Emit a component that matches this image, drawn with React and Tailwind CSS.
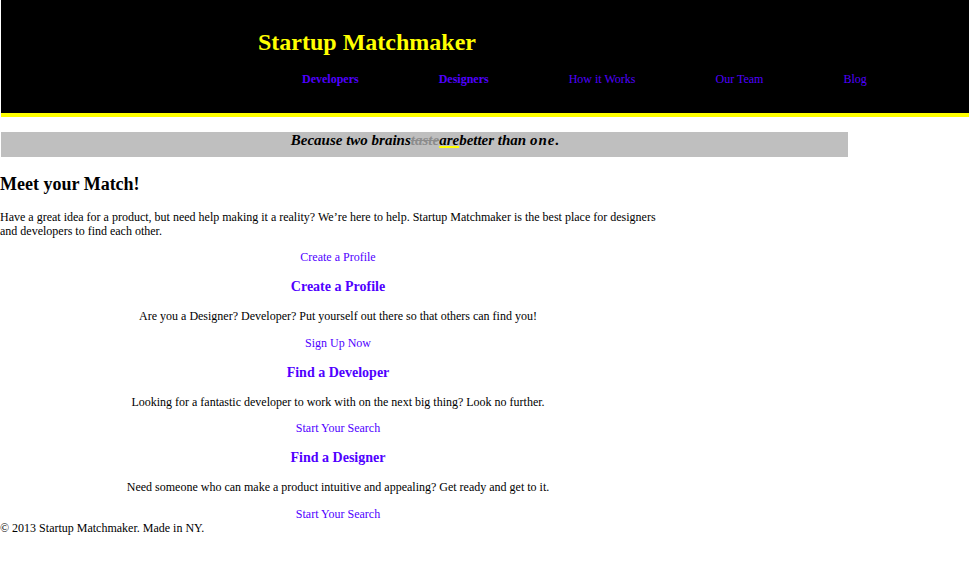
import React from 'react';

const navItems = [
    { label: "Developers", bold: true },
    { label: "Designers", bold: true },
    { label: "How it Works", bold: false },
    { label: "Our Team", bold: false },
    { label: "Blog", bold: false }
];

const sections = [
    {
        title: "Create a Profile",
        text: "Are you a Designer? Developer? Put yourself out there so that others can find you!",
        cta: "Sign Up Now"
    },
    {
        title: "Find a Developer",
        text: "Looking for a fantastic developer to work with on the next big thing? Look no further.",
        cta: "Start Your Search"
    },
    {
        title: "Find a Designer",
        text: "Need someone who can make a product intuitive and appealing? Get ready and get to it.",
        cta: "Start Your Search"
    }
];

export default function App() {
    return (
        <div className="min-h-[568px] bg-white text-black font-['Liberation_Serif','Times_New_Roman',serif]">
            {/* Header */}
            <header className="ml-px h-[117px] bg-black border-b-4 border-[#ffff00]">
                <h1 className="pl-[257px] pt-[28px] text-[24px] leading-[28px] font-bold text-[#ffff00]">
                    Startup Matchmaker
                </h1>
                <nav className="pl-[301px] pt-[16px] flex gap-[80px] text-[12px] leading-[14px]">
                    {navItems.map(item => (
                        <a key={item.label} href="#" className={`text-[#5000ff] ${item.bold ? 'font-bold' : 'font-normal'}`}>
                            {item.label}
                        </a>
                    ))}
                </nav>
            </header>

            {/* Tagline banner */}
            <div className="ml-px mt-[15px] w-[847px] h-[25px] bg-[#bfbfbf] text-center">
                <p className="pl-[2px] text-[15px] leading-[17px] font-bold italic">
                    Because two brains
                    <span className="line-through text-[#8c8c8c]">taste</span>
                    <span className="underline decoration-[#ffff00] decoration-2">are</span>
                    better than <span className="tracking-[1px]">one.</span>
                </p>
            </div>

            {/* Intro */}
            <main className="w-[676px]">
                <h2 className="mt-[16px] text-[18px] leading-[22px] font-bold">Meet your Match!</h2>
                <p className="mt-[15px] text-[12px] leading-[14px] pr-[10px]">
                    Have a great idea for a product, but need help making it a reality? We’re here to help. Startup Matchmaker is the best place for designers and developers to find each other.
                </p>
                <div className="mt-[12px] text-center text-[12px] leading-[14px]">
                    <a href="#" className="text-[#5000ff]">Create a Profile</a>
                </div>

                {sections.map(s => (
                    <section key={s.title} className="text-center">
                        <h3 className="mt-[15px] text-[14px] leading-[16.5px] font-bold text-[#5000ff]">{s.title}</h3>
                        <p className="mt-[13.5px] text-[12px] leading-[14px]">{s.text}</p>
                        <div className="mt-[12.5px] text-[12px] leading-[14px]">
                            <a href="#" className="text-[#5000ff]">{s.cta}</a>
                        </div>
                    </section>
                ))}
            </main>

            {/* Footer */}
            <footer className="text-[12px] leading-[14px]">
                © 2013 Startup Matchmaker. Made in NY.
            </footer>
        </div>
    );
}
